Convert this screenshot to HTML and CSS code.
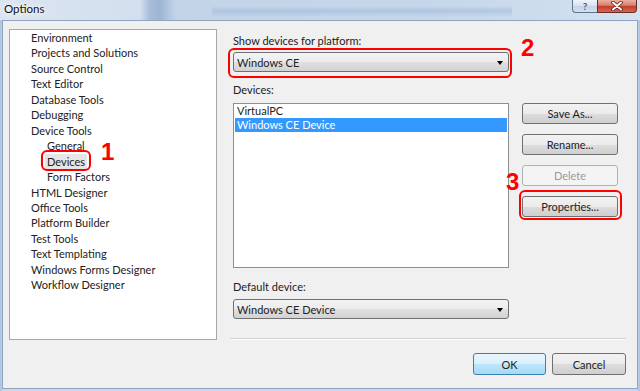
FILE: index.html
```html
<!DOCTYPE html>
<html lang="en">
<head>
    <meta charset="UTF-8">
    <title>Options</title>
    <link rel="stylesheet" href="styles.css">
</head>
<body>
    <div class="window">
        <!-- Aero title bar -->
        <div class="titlebar">
            <span class="title">Options</span>
            <div class="caption-buttons">
                <span class="cap-btn cap-help">?</span>
                <span class="cap-btn cap-close">
                    <svg width="16" height="10" viewBox="0 0 16 10">
                        <path d="M4 1.5 L12 8.5 M12 1.5 L4 8.5" stroke="#5a2018" stroke-width="3.6" stroke-linecap="round"/>
                        <path d="M4 1.5 L12 8.5 M12 1.5 L4 8.5" stroke="#fff" stroke-width="2" stroke-linecap="round"/>
                    </svg>
                </span>
            </div>
        </div>

        <div class="client">
            <div class="dialog-body">
                <!-- Category tree -->
                <ul class="tree">
                    <li>Environment</li>
                    <li>Projects and Solutions</li>
                    <li>Source Control</li>
                    <li>Text Editor</li>
                    <li>Database Tools</li>
                    <li>Debugging</li>
                    <li>Device Tools</li>
                    <li class="child">General</li>
                    <li class="child">
                        <span class="selected callout callout-tree">Devices<span class="marker marker-1">1</span></span>
                    </li>
                    <li class="child">Form Factors</li>
                    <li>HTML Designer</li>
                    <li>Office Tools</li>
                    <li>Platform Builder</li>
                    <li>Test Tools</li>
                    <li>Text Templating</li>
                    <li>Windows Forms Designer</li>
                    <li>Workflow Designer</li>
                </ul>

                <!-- Devices page -->
                <div class="pane">
                    <div class="field-label">Show devices for platform:</div>
                    <div class="combo callout callout-combo">
                        <span>Windows CE</span>
                        <span class="combo-arrow"></span>
                        <span class="marker marker-2">2</span>
                    </div>

                    <div class="field-label label-devices">Devices:</div>
                    <div class="devices-row">
                        <ul class="listbox">
                            <li>VirtualPC</li>
                            <li class="active">Windows CE Device</li>
                        </ul>
                        <div class="side-buttons">
                            <button class="btn">Save As...</button>
                            <button class="btn">Rename...</button>
                            <button class="btn" disabled>Delete</button>
                            <button class="btn callout callout-btn">Properties...<span class="marker marker-3">3</span></button>
                        </div>
                    </div>

                    <div class="field-label label-default">Default device:</div>
                    <div class="combo combo-default">
                        <span>Windows CE Device</span>
                        <span class="combo-arrow"></span>
                    </div>
                </div>
            </div>

            <div class="footer">
                <button class="btn btn-ok">OK</button>
                <button class="btn btn-cancel">Cancel</button>
            </div>
        </div>
    </div>
</body>
</html>
```

FILE: styles.css
```css
/* Reset */
* {
    margin: 0;
    padding: 0;
    box-sizing: border-box;
}

html, body {
    width: 640px;
    height: 391px;
    overflow: hidden;
}

body {
    font-family: "Lato", "Noto Sans", sans-serif;
    font-size: 11px;
    color: #222;
    background: #c3d6eb;
}

/* Window frame */
.window {
    width: 640px;
    height: 391px;
    display: flex;
    flex-direction: column;
    background: linear-gradient(90deg, #a9c2e0 0, #c7d8ec 3px, #c7d8ec 637px, #a9c2e0 100%);
}

/* Title bar with blurred glass behind it */
.titlebar {
    height: 20px;
    flex: none;
    display: flex;
    align-items: flex-start;
    background:
        linear-gradient(180deg, transparent 0, transparent 30%, rgba(150, 175, 210, 0.45) 55%, transparent 85%) 212px 0 / 300px 100% no-repeat,
        linear-gradient(90deg, #dbe5f1 0, #d3dfee 140px, #a7bdd9 150px, #9db6d5 160px, #c3d4e9 176px, #c6d7eb 440px, #d4e1ef 100%);
}

.title {
    padding: 1px 0 0 4px;
    line-height: 15px;
    font-size: 11.5px;
    color: #111;
    text-shadow: 0 0 5px #fff, 0 0 8px #fff;
}

.caption-buttons {
    margin-left: auto;
    margin-right: 3px;
    display: flex;
    height: 13px;
}

.cap-btn {
    display: flex;
    align-items: center;
    justify-content: center;
    border: 1px solid #5f7390;
    border-top: none;
}

.cap-help {
    width: 25px;
    border-right: none;
    border-bottom-left-radius: 4px;
    background: linear-gradient(#f0f4fa, #d6e1ee 50%, #c4d3e6 50%, #d5e0ef);
    color: #4c5e78;
    font-size: 10px;
    font-weight: bold;
}

.cap-close {
    width: 40px;
    border-color: #6d2a22;
    border-bottom-right-radius: 4px;
    background: linear-gradient(#eab0a2, #d97d6a 45%, #c43d2b 50%, #d5664f);
}

/* Client area */
.client {
    flex: 1;
    margin: 0 2px 2px;
    border: 1px solid #8ea4bf;
    background: #f0f0f0;
    padding: 8px 11px 0 6px;
}

.dialog-body {
    display: flex;
    gap: 13px;
    align-items: flex-start;
}

/* Tree view */
.tree {
    width: 208px;
    height: 311px;
    flex: none;
    background: #fff;
    border: 1px solid #a3a8ae;
    list-style: none;
    padding-left: 21px;
    line-height: 15.45px;
}

.tree .child {
    padding-left: 16px;
}

.selected {
    display: inline-block;
    padding: 0 2px;
    margin-left: -2px;
    line-height: 15px;
    background: #e6e6e6;
}

/* Right pane */
.pane {
    width: 396px;
    height: 310px;
    flex: none;
    padding: 5px 0 0 3px;
    border-bottom: 1px solid #d3d3d3;
    box-shadow: 0 1px 0 #fff;
    display: flex;
    flex-direction: column;
    align-items: flex-start;
}

.field-label {
    line-height: 14px;
}

.label-devices {
    margin-top: 11px;
}

.label-default {
    margin-top: 12px;
}

.combo {
    width: 276px;
    height: 20px;
    margin-top: 4px;
    border: 1px solid #707070;
    border-radius: 3px;
    background: linear-gradient(#f3f3f3, #ececec 50%, #e0e0e0 50%, #d2d2d2);
    display: flex;
    align-items: center;
    padding-left: 3px;
}

.combo-default {
    margin-top: 5px;
}

.combo-arrow {
    margin-left: auto;
    margin-right: 5px;
    margin-top: 2px;
    border-left: 3.5px solid transparent;
    border-right: 3.5px solid transparent;
    border-top: 4px solid #000;
}

.devices-row {
    display: flex;
    gap: 13px;
    margin-top: 6px;
}

.listbox {
    width: 276px;
    height: 165px;
    background: #fff;
    border: 1px solid #8b9097;
    padding: 0 1px;
    list-style: none;
}

.listbox li {
    line-height: 14px;
    padding-left: 2px;
}

.listbox .active {
    background: #3399ff;
    color: #fff;
}

.side-buttons {
    display: flex;
    flex-direction: column;
    gap: 10px;
}

/* Win7 push buttons */
.btn {
    font: inherit;
    width: 96px;
    height: 21px;
    border: 1px solid #707070;
    border-radius: 3px;
    background: linear-gradient(#f2f2f2, #ebebeb 50%, #dddddd 50%, #cfcfcf);
    color: #222;
}

.btn:disabled {
    border-color: #adb2b5;
    background: #f4f4f4;
    color: #9a9a9a;
}

.footer {
    display: flex;
    justify-content: flex-end;
    gap: 6px;
    margin-top: 13px;
}

.btn-ok,
.btn-cancel {
    height: 22px;
}

.btn-ok {
    width: 73px;
    border-color: #3c7fb1;
    background: linear-gradient(#eaf6fd, #d9f0fc 50%, #bee6fd 50%, #a7d9f5);
}

.btn-cancel {
    width: 74px;
}

/* Red annotations drawn over the screenshot */
.callout {
    position: relative;
}

.callout::after {
    content: "";
    position: absolute;
    border: 2px solid #f00;
    border-radius: 6px;
}

.callout-tree::after {
    inset: -4px -4px -2px -4px;
}

.callout-combo::after {
    inset: -5px -4px -7px -6px;
}

.callout-btn::after {
    inset: -7px -5px -4px -4px;
}

.marker {
    position: absolute;
    font: bold 24px/1 "Liberation Sans", Arial, sans-serif;
    color: #f00;
}

.marker-1 {
    left: 56px;
    top: -14px;
}

.marker-2 {
    left: 287px;
    top: -17px;
}

.marker-3 {
    left: -17px;
    top: -27px;
}
```
